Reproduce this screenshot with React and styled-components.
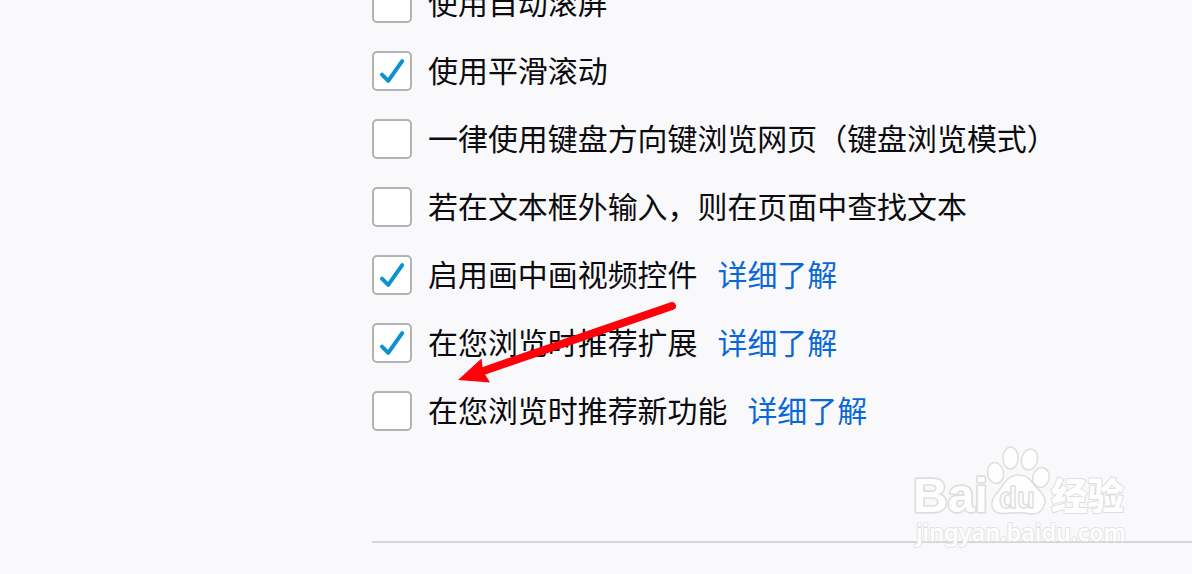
import React from "react";
import styled, { createGlobalStyle } from "styled-components";

const GlobalStyle = createGlobalStyle`
  html, body { margin: 0; padding: 0; background: #f9f9fb; overflow: hidden; }
`;

const Page = styled.main`
  position: relative;
  box-sizing: border-box;
  width: 1192px;
  height: 574px;
  padding-left: 372px;
  overflow: hidden;
  background: #f9f9fb;
  color: #0c0c0f;
  font-family: "Noto Sans CJK SC", sans-serif;
  font-size: 29.95px;
  line-height: 36px;
`;

const Options = styled.div`
  display: flex;
  flex-direction: column;
  gap: 28px;
  margin-top: -17px;
`;

const OptionRow = styled.div`
  display: flex;
  align-items: flex-start;
  height: 40px;
`;

const Box = styled.span`
  display: flex;
  flex: none;
  box-sizing: border-box;
  width: 40px;
  height: 40px;
  margin-right: 16px;
  border: 2px solid #b3b3b4;
  border-radius: 5px;
  background: #fff;
`;

const Label = styled.span`
  white-space: nowrap;
`;

const Link = styled.a`
  margin-left: 20px;
  color: #0a67d8;
  white-space: nowrap;
`;

const Divider = styled.hr`
  height: 2px;
  margin: 110px 0 0;
  border: 0;
  background: #d6d6d9;
`;

const Overlay = styled.svg`
  position: absolute;
  inset: 0;
  pointer-events: none;
`;

const options = [
  { text: "使用自动滚屏" },
  { text: "使用平滑滚动", checked: true },
  { text: "一律使用键盘方向键浏览网页（键盘浏览模式）" },
  { text: "若在文本框外输入，则在页面中查找文本" },
  { text: "启用画中画视频控件", checked: true, link: true },
  { text: "在您浏览时推荐扩展", checked: true, link: true },
  { text: "在您浏览时推荐新功能", link: true },
];

function Option({ text, checked, link }) {
  return (
    <OptionRow>
      <Box>
        {checked && (
          <svg width="36" height="36" viewBox="0 0 36 36" fill="none">
            <path d="M8 21.7L14.2 27.9L28.2 8.2" stroke="#0d92cf" strokeWidth="4" strokeLinecap="round" strokeLinejoin="round" />
          </svg>
        )}
      </Box>
      <Label>{text}</Label>
      {link && <Link>详细了解</Link>}
    </OptionRow>
  );
}

function Watermark() {
  return (
    <g fill="#fefefe" stroke="#dedee0" strokeWidth="3.4" paintOrder="stroke" strokeLinejoin="round">
      <text x="913" y="512" fontFamily="Liberation Sans, sans-serif" fontWeight="700" fontSize="48" textLength="75" lengthAdjust="spacingAndGlyphs">Bai</text>
      <g strokeWidth="1.5" paintOrder="normal">
        <ellipse cx="995.5" cy="473" rx="8" ry="10.5" transform="rotate(-10 995.5 473)" />
        <ellipse cx="1010.5" cy="458" rx="7.7" ry="11" />
        <ellipse cx="1029.5" cy="459.5" rx="8" ry="10.5" transform="rotate(14 1029.5 459.5)" />
        <ellipse cx="1041" cy="477.5" rx="8.2" ry="10" transform="rotate(12 1041 477.5)" />
        <path d="M1018 475C1009 475 1005 482 1000 489C995 495 991 499 992 506C993 512 998 514 1005 513.5C1013 512.5 1023 512.5 1031 514C1039 515 1044 509 1045 502C1045 495 1040 491 1035 486C1030 479 1027 475 1018 475Z" />
        <text x="999" y="508" fontFamily="Liberation Sans, sans-serif" fontWeight="700" fontSize="30" textLength="36" lengthAdjust="spacingAndGlyphs">du</text>
      </g>
      <text x="1051" y="510" fontFamily="Noto Sans CJK SC, sans-serif" fontWeight="900" fontSize="37" strokeWidth="2" textLength="73" lengthAdjust="spacingAndGlyphs">经验</text>
      <text x="916" y="541" fontFamily="Noto Sans, sans-serif" fontWeight="600" fontSize="24" strokeWidth="2" stroke="#e3e3e5" textLength="210" lengthAdjust="spacingAndGlyphs">jingyan.baidu.com</text>
    </g>
  );
}

export default function App() {
  return (
    <>
      <GlobalStyle />
      <Page>
        <Options>
          {options.map((option) => <Option key={option.text} {...option} />)}
        </Options>
        <Divider />
        <Overlay width="1192" height="574" viewBox="0 0 1192 574">
          <Watermark />
          <path d="M672 306L482 371.5" stroke="#fd0208" strokeWidth="8" strokeLinecap="round" />
          <path d="M458 380L481.5 358.5L483 371L490 382.5Z" fill="#fd0208" />
        </Overlay>
      </Page>
    </>
  );
}
